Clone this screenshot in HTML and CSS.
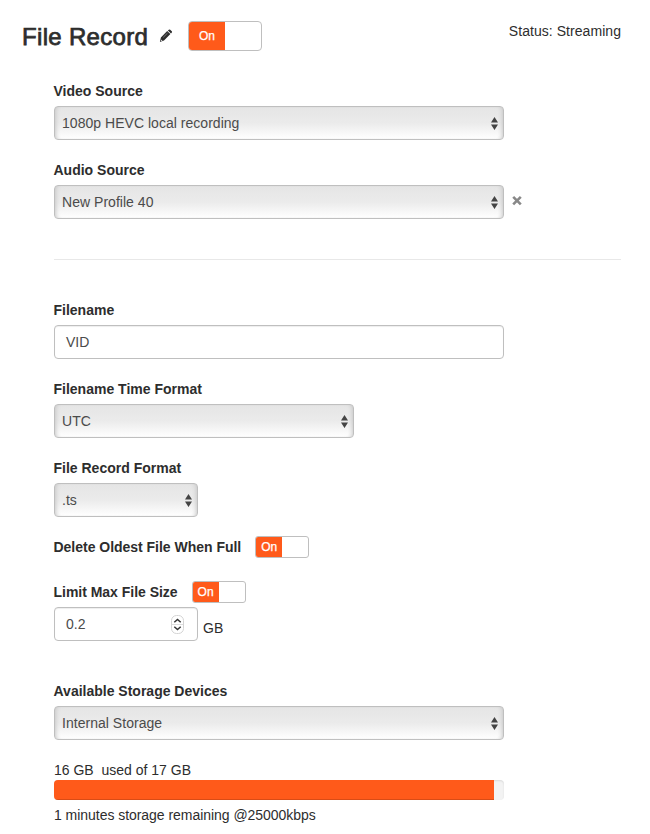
FILE: index.html
```
<!DOCTYPE html>
<html lang="en">
<head>
<meta charset="utf-8">
<title>File Record</title>
<link rel="stylesheet" href="styles.css">
</head>
<body>
<header class="header">
  <h1 class="title">File Record</h1>
  <svg class="pencil" width="14" height="14" viewBox="0 0 14 14"><path d="M8.9 1.4 9.8.7Q10.5.1 11.2.7L12.8 2.2Q13.4 2.9 12.8 3.6L12 4.4ZM8.2 2.1 11.4 5.1 5 11.6 .9 12.9 1.9 8.4Z" fill="#2d2d2d"/><path d="m4.2 8.4 4.3-4.3" stroke="#999" stroke-width=".7"/><path d="m2.2 10.4 1.3 1.3-1.4.5z" fill="#fff"/></svg>
  <div class="toggle toggle-lg"><span class="toggle-on">On</span></div>
  <div class="status">Status: Streaming</div>
</header>
<main class="form">
  <section class="group">
    <label class="label">Video Source</label>
    <div class="select"><span>1080p HEVC local recording</span><svg class="arrows" width="7" height="13" viewBox="0 0 7 13"><path d="M0 5.5 3.5 0 7 5.5zM0 7.5h7L3.5 13z"/></svg></div>
  </section>
  <section class="group">
    <label class="label">Audio Source</label>
    <div class="row">
      <div class="select"><span>New Profile 40</span><svg class="arrows" width="7" height="13" viewBox="0 0 7 13"><path d="M0 5.5 3.5 0 7 5.5zM0 7.5h7L3.5 13z"/></svg></div>
      <svg class="remove" width="10" height="11" viewBox="0 0 10 11"><path d="m1.2 1.8 7.6 7.6m0-7.6L1.2 9.4"/></svg>
    </div>
  </section>
  <hr class="divider">
  <section class="group">
    <label class="label">Filename</label>
    <div class="input">VID</div>
  </section>
  <section class="group">
    <label class="label">Filename Time Format</label>
    <div class="select select-md"><span>UTC</span><svg class="arrows" width="7" height="13" viewBox="0 0 7 13"><path d="M0 5.5 3.5 0 7 5.5zM0 7.5h7L3.5 13z"/></svg></div>
  </section>
  <section class="group">
    <label class="label">File Record Format</label>
    <div class="select select-sm"><span>.ts</span><svg class="arrows" width="7" height="13" viewBox="0 0 7 13"><path d="M0 5.5 3.5 0 7 5.5zM0 7.5h7L3.5 13z"/></svg></div>
  </section>
  <section class="switch-row delete-row">
    <label class="label">Delete Oldest File When Full</label>
    <div class="toggle"><span class="toggle-on">On</span></div>
  </section>
  <section class="switch-row">
    <label class="label">Limit Max File Size</label>
    <div class="toggle"><span class="toggle-on">On</span></div>
  </section>
  <div class="row size-row">
    <div class="input input-sm"><span>0.2</span><svg class="stepper" width="13" height="19" viewBox="0 0 13 19"><rect x=".5" y=".5" width="12" height="18" rx="5" fill="#fff" stroke="#d4d4d4"/><path d="M1 9.5h11" stroke="#ddd"/><path d="m3.3 7.2 3.2-2.8 3.2 2.8M3.3 11.8l3.2 2.8 3.2-2.8" fill="none" stroke="#333" stroke-width="1.5"/></svg></div>
    <span class="unit">GB</span>
  </div>
  <section class="storage">
    <label class="label">Available Storage Devices</label>
    <div class="select"><span>Internal Storage</span><svg class="arrows" width="7" height="13" viewBox="0 0 7 13"><path d="M0 5.5 3.5 0 7 5.5zM0 7.5h7L3.5 13z"/></svg></div>
  </section>
  <div class="usage">16 GB&nbsp; used of 17 GB</div>
  <div class="progress"><div class="bar"></div></div>
  <div class="remaining">1 minutes storage remaining @25000kbps</div>
</main>
</body>
</html>
```
FILE: styles.css
```
* { box-sizing: border-box; }
body {
  margin: 0;
  background: #fff;
  color: #2d2d2d;
  font: 14px/20px "Liberation Sans", Arial, sans-serif;
}
.header { display: flex; height: 81px; padding: 21px 29px 0 22px; }
.title { margin: 0; font-size: 24px; line-height: 31px; font-weight: 400; letter-spacing: .32px; -webkit-text-stroke: .75px #2d2d2d; width: 126px; white-space: nowrap; }
.pencil { margin: 8px 0 0 11px; }
.status { margin-left: auto; letter-spacing: .05px; }
.toggle {
  width: 54px;
  height: 22px;
  border: 1px solid #bfbfbf;
  border-radius: 3px;
  overflow: hidden;
  background: #fff;
}
.toggle-on {
  display: block;
  width: 26px;
  height: 100%;
  background: #ff5a1a;
  color: #fff;
  font-size: 12px;
  line-height: 20px;
  text-align: center;
  -webkit-text-stroke: .25px #fff;
}
.toggle-lg { width: 74px; height: 30px; margin-left: 15px; border-radius: 4px; }
.toggle-lg .toggle-on { width: 36px; line-height: 28px; }
.form { padding: 0 29px 0 54px; }
.group { margin-bottom: 20px; }
.label { display: block; margin: 0 0 5px -.5px; font-weight: 700; white-space: nowrap; }
.row { display: flex; }
.select, .input {
  display: flex;
  align-items: center;
  justify-content: space-between;
  width: 450px;
  height: 34px;
  border: 1px solid #bfbfbf;
  border-radius: 4px;
  color: #4b4b4b;
}
.select {
  padding: 0 5.5px 0 7px;
  background: linear-gradient(#e5e5e5, #ebebeb 50%, #fff);
  box-shadow: inset 4px 0 4px -3px #c8c8c8, inset -4px 0 4px -3px #c8c8c8;
}
.select span { letter-spacing: .03px; }
.select-md { width: 300px; }
.select-sm { width: 144px; }
.arrows { fill: #444; }
.input { padding: 0 11px; box-shadow: inset 0 1px 1px rgba(0,0,0,.07); }
.input-sm { width: 144px; padding-right: 13px; }
.remove { margin: 10px 0 0 8px; stroke: #888; stroke-width: 2.6; fill: none; }
.divider { height: 1px; margin: 40px 0; border: 0; background: #e8e8e8; }
.switch-row { display: flex; align-items: center; gap: 14px; height: 22px; }
.switch-row .label { margin: 0 0 0 -.5px; letter-spacing: -.02px; }
.group + .delete-row { margin: -1px 0 23px; }
.size-row { margin-top: 4px; }
.unit { margin: 11px 0 0 5px; }
.storage { margin-top: 40px; }
.usage { margin-top: 20px; }
.progress { width: 450px; height: 20px; border-radius: 4px; overflow: hidden; background: #f3f3f3; box-shadow: inset 0 1px 2px rgba(0,0,0,.1); }
.bar { width: 440px; height: 100%; background: #ff5a1a; box-shadow: inset 0 -1px 0 rgba(0,0,0,.15); }
.remaining { margin-top: 5px; letter-spacing: -.04px; }
```
